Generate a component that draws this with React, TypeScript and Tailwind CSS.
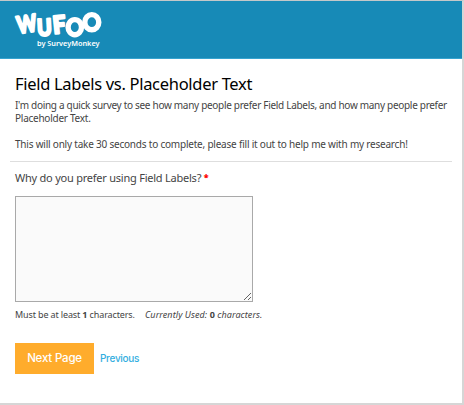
import React, { useState } from 'react'

const Logo = () => {
    return (
        <svg width="90" height="42" viewBox="0 0 90 42" className="block overflow-visible" fill="#fff" fontFamily="Lato, sans-serif" role="img" aria-label="Wufoo by SurveyMonkey">
            <g fontWeight="900" fontSize="24" stroke="#fff" strokeWidth="2.4" strokeLinejoin="round">
                <text transform="translate(5.2 24.8) rotate(-9) scale(0.78 0.98)">W</text>
                <text transform="translate(24.6 27) rotate(-3) scale(0.82 0.96)">U</text>
                <text transform="translate(40.8 24.8) rotate(-6) scale(0.94 1)">F</text>
            </g>
            <g fill="none" stroke="#fff" strokeWidth="5.4">
                <ellipse cx="61.8" cy="18.2" rx="6.7" ry="7.6" />
                <ellipse cx="78.8" cy="13.2" rx="7" ry="7.6" />
            </g>
            <text x="24" y="37.3" fontFamily="Noto Sans, sans-serif" fontSize="7" fontWeight="600" textLength="62.5" lengthAdjust="spacingAndGlyphs">by SurveyMonkey</text>
        </svg>
    )
}

const App = () => {
    const [answer, setAnswer] = useState('')

    return (
        <div className="flex flex-col w-[464px] h-[405px] bg-white border-t border-t-[#c4c8c9] border-r-2 border-r-[#d6d6d6] border-b-2 border-b-[#d6d6d6] font-['Noto_Sans',sans-serif] text-[#444] overflow-hidden">
            <header className="h-[58px] shrink-0 bg-[#178ab7] border-b border-[#36a3cf] pl-[13px] pt-[8px]">
                <Logo />
            </header>

            <main className="flex flex-col px-[10px]">
                <div className="h-[103px] border-b border-[#dedede] pl-[5px] pt-[14px]">
                    <h1 className="text-[16.5px] leading-[22px] text-black whitespace-nowrap tracking-[-0.3px]">Field Labels vs. Placeholder Text</h1>
                    <div className="mt-[4px] text-[10px] leading-[13px] whitespace-nowrap">
                        <p className="tracking-[-0.3px]">I'm doing a quick survey to see how many people prefer Field Labels, and how many people prefer</p>
                        <p className="tracking-[-0.25px]">Placeholder Text.</p>
                        <p className="mt-[13px] tracking-[-0.21px]">This will only take 30 seconds to complete, please fill it out to help me with my research!</p>
                    </div>
                </div>

                <form className="flex flex-col pl-[5px]" onSubmit={(e) => e.preventDefault()}>
                    <label htmlFor="reason" className="mt-[8px] h-[16px] text-[11px] leading-[16px] whitespace-nowrap tracking-[-0.23px]">
                        Why do you prefer using Field Labels? <span className="relative -top-px text-[9px] leading-none font-black text-[#f00]">*</span>
                    </label>
                    <textarea
                        id="reason"
                        value={answer}
                        onChange={(e) => setAnswer(e.target.value)}
                        className="mt-[10px] block w-[238px] h-[106px] border border-[#a9a9a9] bg-[#fafafa] resize"
                    />
                    <div className="mt-[6px] flex text-[9px] leading-[13px] whitespace-pre">
                        <span className="w-[130px] tracking-[-0.13px]">Must be at least <b>1</b> characters.</span>
                        <em className="tracking-[0.08px]">Currently Used: <b className="not-italic">{answer.length}</b> characters.</em>
                    </div>
                    <div className="mt-[22px] flex items-center gap-[6px] font-['Inter',sans-serif]">
                        <button type="submit" className="w-[79px] h-[31px] pt-px bg-[#ffac2c] text-white text-[11.5px] font-medium tracking-[-0.2px]">Next Page</button>
                        <a href="#" className="mb-px text-[10px] leading-[13px] tracking-[-0.3px] font-medium text-[#32aee0]">Previous</a>
                    </div>
                </form>
            </main>
        </div>
    )
}

export default App
